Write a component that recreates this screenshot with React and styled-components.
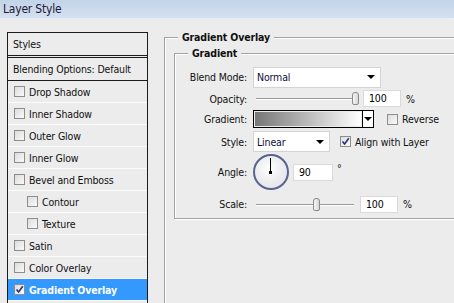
import React from 'react'
import styled, { createGlobalStyle } from 'styled-components'

const Global = createGlobalStyle`
  html, body { margin: 0; padding: 0; }
  body {
    width: 454px;
    height: 303px;
    overflow: hidden;
    background: #ececec;
    font-family: "DejaVu Sans Condensed", "DejaVu Sans", sans-serif;
    font-stretch: condensed;
    font-size: 10.5px;
    letter-spacing: -0.15px;
    color: #111;
  }
`

export const StyledWindow = styled.div`
    width: 454px;
    height: 303px;
    overflow: hidden;
    display: flex;
    flex-direction: column;
`
export const StyledTitle = styled.div`
    height: 18px;
    flex-shrink: 0;
    background: linear-gradient(#c3d4e9, #d3e0ef);
    border-bottom: 1px solid #e6edf5;
    color: #23183a;
    font-size: 12px;
    letter-spacing: -0.2px;
    line-height: 18px;
    padding-left: 3px;
`
export const StyledBody = styled.div`
    display: flex;
    align-items: flex-start;
    padding: 13px 0 0 7px;
    gap: 16px;
`
export const StyledList = styled.div`
    width: 139px;
    flex-shrink: 0;
    height: 300px;
    border: 1px solid #1c1c1c;
    border-bottom: none;
    background: #ececec;
`
export const StyledItem = styled.div`
    height: ${p => p.$plain ? 22 : 21}px;
    display: flex;
    align-items: center;
    gap: 4px;
    padding-left: ${p => p.$indent ? 19 : p.$plain ? 5 : 6}px;
    border-bottom: ${p => p.$double ? '3px double #1c1c1c' : p.$dark ? '1px solid #1c1c1c' : '1px solid #fbfbfb'};
    background: ${p => p.$active ? '#3399ff' : 'transparent'};
    color: ${p => p.$active ? '#fff' : '#111'};
    font-weight: ${p => p.$active ? 700 : 400};
    white-space: nowrap;
`
export const StyledCheck = styled.span`
    width: 9px;
    height: 9px;
    flex-shrink: 0;
    border: 1px solid #8d8d8d;
    background: linear-gradient(135deg, #dcdcdc, #fafafa);
    display: flex;
    align-items: center;
    justify-content: center;
`
export const StyledRight = styled.div`
    flex: 1;
    padding-top: 5px;
`
export const StyledGroup = styled.div`
    position: relative;
    border: 1px solid #a2a2a2;
    border-right: none;
    box-shadow: inset 1px 1px 0 #fff, 1px 1px 0 #fff;
    ${p => p.$outer ? 'border-bottom: none; height: 280px;' : ''}
    margin: ${p => p.$outer ? '0' : '15px 0 0 9px'};
    padding: ${p => p.$outer ? '0' : '12px 0 4px 0'};
`
export const StyledLegend = styled.span`
    position: absolute;
    top: -7px;
    left: ${p => p.$left}px;
    padding: 0 4px;
    background: #ececec;
    font-weight: 700;
    line-height: 13px;
`
export const StyledRow = styled.div`
    display: flex;
    align-items: center;
    height: ${p => p.$h}px;
    margin-top: ${p => p.$mt || 0}px;
`
export const StyledLabel = styled.span`
    width: 72px;
    text-align: right;
    padding-right: 6px;
    flex-shrink: 0;
`
export const StyledSelect = styled.div`
    width: ${p => p.$w}px;
    height: 21px;
    box-sizing: border-box;
    background: #fff;
    border: 1px solid #d4d4d4;
    display: flex;
    align-items: center;
    justify-content: space-between;
    padding: 0 5px 0 3px;
    color: #0e0e3a;
`
export const StyledArrow = styled.span`
    width: 0;
    height: 0;
    border-left: 4px solid transparent;
    border-right: 4px solid transparent;
    border-top: 4px solid #000;
`
export const StyledSlider = styled.div`
    position: relative;
    width: ${p => p.$w}px;
    height: 15px;
    margin: 0 6px 0 3px;
    &::before {
        content: '';
        position: absolute;
        left: 0;
        right: 0;
        top: 7px;
        height: 1px;
        background: #9a9a9a;
        box-shadow: 0 1px 0 #fff;
    }
`
export const StyledThumb = styled.span`
    position: absolute;
    top: 1px;
    left: ${p => p.$pos}px;
    width: 5px;
    height: 11px;
    border: 1px solid #8a8a8a;
    border-radius: 3px 3px 2px 2px;
    background: linear-gradient(90deg, #f6f6f6, #d6d6d6);
`
export const StyledInput = styled.div`
    width: ${p => p.$w}px;
    height: 17px;
    box-sizing: border-box;
    background: #fff;
    border: 1px solid #dadada;
    padding-left: 5px;
    line-height: 15px;
    color: #000;
`
export const StyledUnit = styled.span`
    margin-left: ${p => p.$sup ? 4 : 5}px;
    ${p => p.$sup ? 'align-self: flex-start; margin-top: 9px;' : ''}
`
export const StyledSwatch = styled.div`
    width: 121px;
    height: 18px;
    box-sizing: border-box;
    border: 1px solid #000;
    display: flex;
    margin-right: 13px;
`
export const StyledRamp = styled.div`
    flex: 1;
    margin: 1px;
    background: linear-gradient(90deg, #767676, #ffffff);
`
export const StyledDrop = styled.div`
    width: 10px;
    background: #fff;
    border-left: 1px solid #000;
    display: flex;
    align-items: center;
    justify-content: center;
`
export const StyledOption = styled.span`
    display: flex;
    align-items: center;
    gap: 4px;
    margin-left: ${p => p.$ml || 0}px;
`
export const StyledDial = styled.div`
    position: relative;
    width: 32px;
    height: 32px;
    border: 2px solid #56648f;
    border-radius: 50%;
    background: radial-gradient(circle at 45% 40%, #ffffff, #e4e4ea 75%, #d0d2da);
    margin-right: 4px;
    &::before {
        content: '';
        position: absolute;
        left: 15px;
        top: 2px;
        width: 1px;
        height: 14px;
        background: #000;
    }
    &::after {
        content: '';
        position: absolute;
        left: 14px;
        top: 15px;
        width: 3px;
        height: 3px;
        background: #000;
    }
`

const Tick = () => (
    <svg width="9" height="9" viewBox="0 0 9 9">
        <path d="M1.5 4.5 L3.6 7 L7.8 1.2" fill="none" stroke="#27307a" strokeWidth="1.6" />
    </svg>
)

const Check = ({ on }) => <StyledCheck>{on && <Tick />}</StyledCheck>

const items = [
    { t: 'Drop Shadow' },
    { t: 'Inner Shadow' },
    { t: 'Outer Glow' },
    { t: 'Inner Glow' },
    { t: 'Bevel and Emboss' },
    { t: 'Contour', indent: true },
    { t: 'Texture', indent: true },
    { t: 'Satin' },
    { t: 'Color Overlay' },
    { t: 'Gradient Overlay', on: true },
]

const App = () => {
    return (
        <>
            <Global />
            <StyledWindow>
                <StyledTitle>Layer Style</StyledTitle>
                <StyledBody>
                    <StyledList>
                        <StyledItem $plain $double>Styles</StyledItem>
                        <StyledItem $plain $dark>Blending Options: Default</StyledItem>
                        {items.map(i => (
                            <StyledItem key={i.t} $indent={i.indent} $active={i.on}>
                                <Check on={i.on} />
                                {i.t}
                            </StyledItem>
                        ))}
                    </StyledList>
                    <StyledRight>
                        <StyledGroup $outer>
                            <StyledLegend $left={13}>Gradient Overlay</StyledLegend>
                            <StyledGroup>
                                <StyledLegend $left={13}>Gradient</StyledLegend>
                                <StyledRow $h={22}>
                                    <StyledLabel>Blend Mode:</StyledLabel>
                                    <StyledSelect $w={128}>Normal<StyledArrow /></StyledSelect>
                                </StyledRow>
                                <StyledRow $h={21}>
                                    <StyledLabel>Opacity:</StyledLabel>
                                    <StyledSlider $w={101}><StyledThumb $pos={96} /></StyledSlider>
                                    <StyledInput $w={38}>100</StyledInput>
                                    <StyledUnit>%</StyledUnit>
                                </StyledRow>
                                <StyledRow $h={20}>
                                    <StyledLabel>Gradient:</StyledLabel>
                                    <StyledSwatch>
                                        <StyledRamp />
                                        <StyledDrop><StyledArrow /></StyledDrop>
                                    </StyledSwatch>
                                    <StyledOption><Check />Reverse</StyledOption>
                                </StyledRow>
                                <StyledRow $h={23} $mt={1}>
                                    <StyledLabel>Style:</StyledLabel>
                                    <StyledSelect $w={77}>Linear<StyledArrow /></StyledSelect>
                                    <StyledOption $ml={10}><Check on />Align with Layer</StyledOption>
                                </StyledRow>
                                <StyledRow $h={38}>
                                    <StyledLabel>Angle:</StyledLabel>
                                    <StyledDial />
                                    <StyledInput $w={40}>90</StyledInput>
                                    <StyledUnit $sup>°</StyledUnit>
                                </StyledRow>
                                <StyledRow $h={20} $mt={3}>
                                    <StyledLabel>Scale:</StyledLabel>
                                    <StyledSlider $w={98}><StyledThumb $pos={57} /></StyledSlider>
                                    <StyledInput $w={38}>100</StyledInput>
                                    <StyledUnit>%</StyledUnit>
                                </StyledRow>
                            </StyledGroup>
                        </StyledGroup>
                    </StyledRight>
                </StyledBody>
            </StyledWindow>
        </>
    )
}

export default App
